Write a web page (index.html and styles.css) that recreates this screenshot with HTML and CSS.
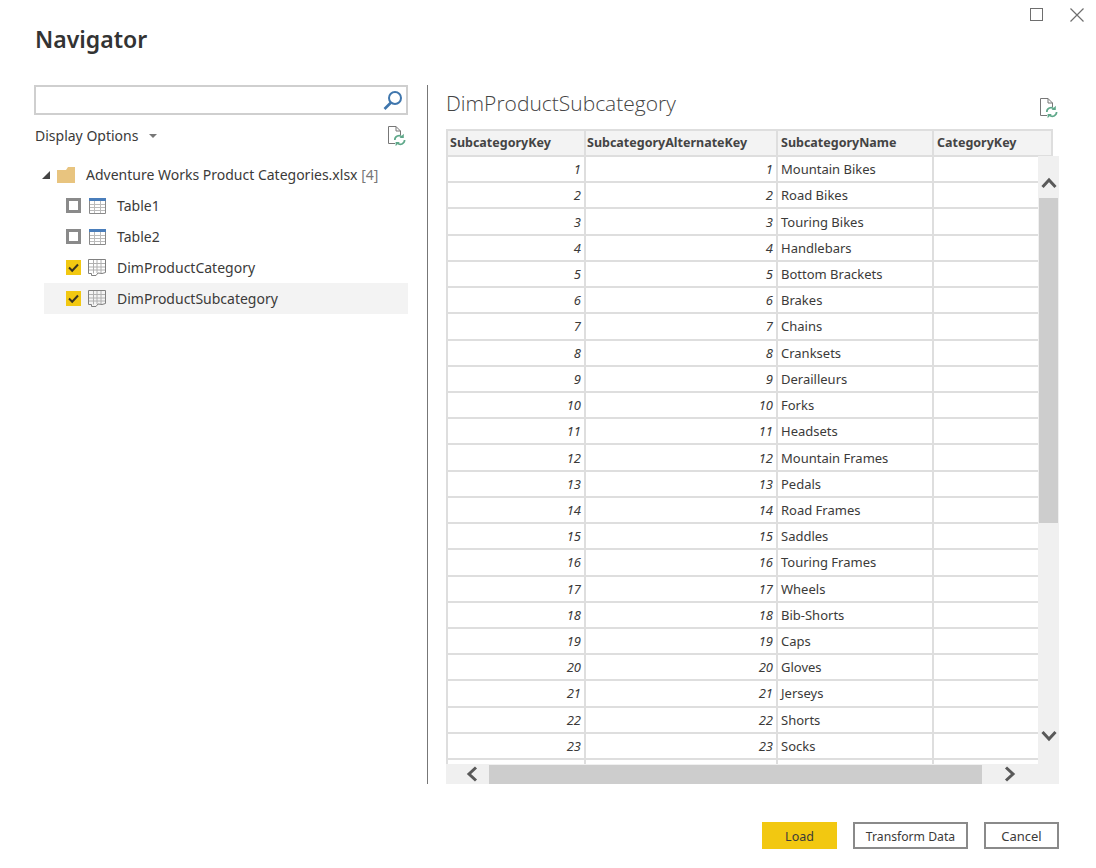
FILE: index.html
```html
<!DOCTYPE html>
<html lang="en">
<head>
    <meta charset="UTF-8">
    <title>Navigator</title>
    <link rel="stylesheet" href="styles.css">
</head>
<body>
<div class="ventana">
    <div class="controles">
        <span class="maximizar"></span>
        <svg class="cerrar" width="14" height="14" viewBox="0 0 14 14"><path d="M.5 .5 13.5 13.5M13.5 .5 .5 13.5" stroke="#6e6e6e" stroke-width="1.2" fill="none"/></svg>
    </div>
    <h1>Navigator</h1>

    <div class="principal">
        <div class="izquierda">
            <div class="buscador">
                <svg width="20" height="20" viewBox="0 0 20 20"><circle cx="12" cy="8" r="6" stroke="#3f76ad" stroke-width="2" fill="none"/><path d="M8 12.5 1.5 19" stroke="#3f76ad" stroke-width="2.6" fill="none"/></svg>
            </div>
            <div class="opciones">
                <span>Display Options</span>
                <span class="flecha"></span>
                <svg class="recargar" width="19" height="20" viewBox="0 0 19 20"><path d="M8 17.5H1.5V.5H9L13.5 5V9M9 .5V5H13.5" stroke="#777" fill="none"/><path d="M7.8 14a4.2 4.2 0 0 1 7.2-3M17.6 14a4.2 4.2 0 0 1-7.2 3" stroke="#5fa88a" stroke-width="1.7" fill="none"/><path d="M16.8 7.8V12H12.6ZM8.6 20.2V16H12.8Z" fill="#5fa88a"/></svg>
            </div>
            <ul class="arbol">
                <li class="fila raiz">
                    <span class="triangulo"></span>
                    <svg width="18" height="16" viewBox="0 0 18 16"><path d="M0 3H9L11 0H18V16H0Z" fill="#e8c47f"/></svg>
                    <span>Adventure Works Product Categories.xlsx <span class="cuenta">[4]</span></span>
                </li>
                <li class="fila">
                    <span class="casilla"></span>
                    <svg class="icono" width="17" height="16" viewBox="0 0 17 16"><path d="M.5 6.5H16.5M.5 9.5H16.5M.5 12.5H16.5M5.5 2.5V15.5M11.5 2.5V15.5" stroke="#bbb" fill="none"/><path d="M.5 2.5H16.5V15.5H.5Z" stroke="#8a8a8a" fill="none"/><path d="M0 0H17V3H0Z" fill="#4a7ebb"/></svg>
                    <span>Table1</span>
                </li>
                <li class="fila">
                    <span class="casilla"></span>
                    <svg class="icono" width="17" height="16" viewBox="0 0 17 16"><path d="M.5 6.5H16.5M.5 9.5H16.5M.5 12.5H16.5M5.5 2.5V15.5M11.5 2.5V15.5" stroke="#bbb" fill="none"/><path d="M.5 2.5H16.5V15.5H.5Z" stroke="#8a8a8a" fill="none"/><path d="M0 0H17V3H0Z" fill="#4a7ebb"/></svg>
                    <span>Table2</span>
                </li>
                <li class="fila">
                    <span class="casilla marcada"><svg width="15" height="15" viewBox="0 0 15 15"><path d="M3 7.5 6.2 10.7 12 4.5" stroke="#3a3320" stroke-width="2" fill="none"/></svg></span>
                    <svg class="icono dim" width="18" height="17" viewBox="0 0 18 17"><path d="M.5 4.5H17.5M.5 8H17.5M.5 11H17.5M5.5 .5V14.5M9 .5V14M13 .5V14" stroke="#b0b0b0" fill="none"/><path d="M3.5 14.5H.5V.5H17.5V13.5L14 14.5 10 14 8 16.5H3.5Z" stroke="#808080" fill="none"/></svg>
                    <span>DimProductCategory</span>
                </li>
                <li class="fila activa">
                    <span class="casilla marcada"><svg width="15" height="15" viewBox="0 0 15 15"><path d="M3 7.5 6.2 10.7 12 4.5" stroke="#3a3320" stroke-width="2" fill="none"/></svg></span>
                    <svg class="icono dim" width="18" height="17" viewBox="0 0 18 17"><path d="M.5 4.5H17.5M.5 8H17.5M.5 11H17.5M5.5 .5V14.5M9 .5V14M13 .5V14" stroke="#b0b0b0" fill="none"/><path d="M3.5 14.5H.5V.5H17.5V13.5L14 14.5 10 14 8 16.5H3.5Z" stroke="#808080" fill="none"/></svg>
                    <span>DimProductSubcategory</span>
                </li>
            </ul>
        </div>

        <div class="derecha">
            <div class="cabecera">
                <h2>DimProductSubcategory</h2>
                <svg class="recargar" width="19" height="20" viewBox="0 0 19 20"><path d="M8 17.5H1.5V.5H9L13.5 5V9M9 .5V5H13.5" stroke="#777" fill="none"/><path d="M7.8 14a4.2 4.2 0 0 1 7.2-3M17.6 14a4.2 4.2 0 0 1-7.2 3" stroke="#5fa88a" stroke-width="1.7" fill="none"/><path d="M16.8 7.8V12H12.6ZM8.6 20.2V16H12.8Z" fill="#5fa88a"/></svg>
            </div>
            <div class="vista">
                <table>
                    <thead>
                        <tr><th>SubcategoryKey</th><th>SubcategoryAlternateKey</th><th>SubcategoryName</th><th>CategoryKey</th></tr>
                    </thead>
                    <tbody>
                        <tr><td class="num">1</td><td class="num">1</td><td>Mountain Bikes</td><td></td></tr>
                        <tr><td class="num">2</td><td class="num">2</td><td>Road Bikes</td><td></td></tr>
                        <tr><td class="num">3</td><td class="num">3</td><td>Touring Bikes</td><td></td></tr>
                        <tr><td class="num">4</td><td class="num">4</td><td>Handlebars</td><td></td></tr>
                        <tr><td class="num">5</td><td class="num">5</td><td>Bottom Brackets</td><td></td></tr>
                        <tr><td class="num">6</td><td class="num">6</td><td>Brakes</td><td></td></tr>
                        <tr><td class="num">7</td><td class="num">7</td><td>Chains</td><td></td></tr>
                        <tr><td class="num">8</td><td class="num">8</td><td>Cranksets</td><td></td></tr>
                        <tr><td class="num">9</td><td class="num">9</td><td>Derailleurs</td><td></td></tr>
                        <tr><td class="num">10</td><td class="num">10</td><td>Forks</td><td></td></tr>
                        <tr><td class="num">11</td><td class="num">11</td><td>Headsets</td><td></td></tr>
                        <tr><td class="num">12</td><td class="num">12</td><td>Mountain Frames</td><td></td></tr>
                        <tr><td class="num">13</td><td class="num">13</td><td>Pedals</td><td></td></tr>
                        <tr><td class="num">14</td><td class="num">14</td><td>Road Frames</td><td></td></tr>
                        <tr><td class="num">15</td><td class="num">15</td><td>Saddles</td><td></td></tr>
                        <tr><td class="num">16</td><td class="num">16</td><td>Touring Frames</td><td></td></tr>
                        <tr><td class="num">17</td><td class="num">17</td><td>Wheels</td><td></td></tr>
                        <tr><td class="num">18</td><td class="num">18</td><td>Bib-Shorts</td><td></td></tr>
                        <tr><td class="num">19</td><td class="num">19</td><td>Caps</td><td></td></tr>
                        <tr><td class="num">20</td><td class="num">20</td><td>Gloves</td><td></td></tr>
                        <tr><td class="num">21</td><td class="num">21</td><td>Jerseys</td><td></td></tr>
                        <tr><td class="num">22</td><td class="num">22</td><td>Shorts</td><td></td></tr>
                        <tr><td class="num">23</td><td class="num">23</td><td>Socks</td><td></td></tr>
                        <tr><td class="num"></td><td class="num"></td><td></td><td></td></tr>
                    </tbody>
                </table>
                <div class="barra-v">
                    <svg width="16" height="12" viewBox="0 0 16 12"><path d="M1.5 10 8 3 14.5 10" stroke="#595959" stroke-width="3" fill="none"/></svg>
                    <span class="pulgar-v"></span>
                    <svg class="abajo" width="16" height="12" viewBox="0 0 16 12"><path d="M1.5 2 8 9 14.5 2" stroke="#595959" stroke-width="3" fill="none"/></svg>
                </div>
                <div class="barra-h">
                    <svg width="12" height="16" viewBox="0 0 12 16"><path d="M10 1.5 3 8 10 14.5" stroke="#595959" stroke-width="3" fill="none"/></svg>
                    <span class="pulgar-h"></span>
                    <svg width="12" height="16" viewBox="0 0 12 16"><path d="M2 1.5 9 8 2 14.5" stroke="#595959" stroke-width="3" fill="none"/></svg>
                </div>
            </div>
        </div>
    </div>

    <div class="botones">
        <button class="primario">Load</button>
        <button class="transformar">Transform Data</button>
        <button class="cancelar">Cancel</button>
    </div>
</div>
</body>
</html>
```

FILE: styles.css
```css
* {
    box-sizing: border-box;
}
html, body {
    margin: 0;
    height: 100%;
    background: #fff;
    overflow: hidden;
}
body {
    font-family: "Noto Sans", "Open Sans", Arial, sans-serif;
    font-size: 14px;
    color: #3b3a39;
}
.ventana {
    width: 1096px;
    height: 868px;
    display: flex;
    flex-direction: column;
}
.controles {
    display: flex;
    justify-content: flex-end;
    align-items: center;
    gap: 27px;
    height: 29px;
    padding: 0 12px 0 0;
}
.maximizar {
    width: 13px;
    height: 13px;
    border: 1px solid #6e6e6e;
}
h1 {
    margin: 0 0 0 35px;
    height: 56px;
    font-size: 23px;
    line-height: 20px;
    font-weight: 600;
    color: #333;
}
.principal {
    display: flex;
    height: 699px;
}
.izquierda {
    width: 394px;
    margin-left: 34px;
    padding-right: 19px;
    border-right: 1px solid #777;
}
.buscador {
    height: 30px;
    display: flex;
    align-items: center;
    justify-content: flex-end;
    padding-right: 3px;
    border: 2px solid #cfcfcf;
}
.opciones {
    display: flex;
    align-items: center;
    height: 40px;
    padding: 1px 2px 0 1px;
}
.flecha {
    margin-left: 11px;
    border: 4px solid transparent;
    border-top-color: #777;
    border-bottom: 0;
}
.opciones .recargar {
    margin-left: auto;
}
.arbol {
    list-style: none;
    margin: 4px 0 0;
    padding: 0 0 0 10px;
}
.fila {
    display: flex;
    align-items: center;
    height: 31px;
    padding-left: 22px;
}
.fila .icono {
    margin: 0 11px 0 8px;
}
.fila .dim {
    margin: 0 11px 0 7px;
}
.raiz {
    margin-left: -2px;
    padding-left: 0;
    gap: 10px;
}
.raiz svg {
    margin: 0 1px 0 -3px;
}
.cuenta {
    color: #777;
}
.triangulo {
    width: 0;
    height: 0;
    margin-top: 1px;
    border-left: 8px solid transparent;
    border-bottom: 8px solid #444;
}
.casilla {
    width: 15px;
    height: 15px;
    border: 3px solid #8a8a8a;
    background: #fff;
}
.marcada {
    border: 0;
    background: #f2c811;
}
.marcada svg {
    display: block;
}
.activa {
    background: #f3f3f3;
}
.derecha {
    width: 613px;
    margin-left: 18px;
    display: flex;
    flex-direction: column;
}
.cabecera {
    display: flex;
    justify-content: space-between;
    height: 44px;
}
h2 {
    margin: 0;
    font-family: "Open Sans", sans-serif;
    font-size: 21px;
    font-weight: 300;
    line-height: 36px;
    color: #444;
}
.cabecera .recargar {
    margin: 13px 1px 0 0;
}
.vista {
    position: relative;
    flex: 1;
    overflow: hidden;
}
table {
    width: 607px;
    table-layout: fixed;
    border-collapse: collapse;
}
th, td {
    padding: 0 3px;
    border: 2px solid #dedede;
    font-size: 13px;
    overflow: hidden;
    white-space: nowrap;
}
th:nth-child(1) { width: 138px; }
th:nth-child(2) { width: 192px; }
th:nth-child(3) { width: 156px; }
th {
    height: 26px;
    padding: 0 3px 1px;
    background: #f3f3f3;
    text-align: left;
    font-size: 12.5px;
    font-weight: 700;
    color: #444;
}
th:nth-child(1) { padding-left: 2px; }
th:nth-child(2) { padding-left: 1px; }
td {
    height: 26.225px;
}
.num {
    text-align: right;
    font-style: italic;
}
.barra-v {
    position: absolute;
    top: 27px;
    right: 0;
    bottom: 20px;
    width: 21px;
    display: flex;
    flex-direction: column;
    align-items: center;
    background: #f0f0f0;
}
.barra-v svg {
    margin-top: 21px;
    flex: none;
}
.barra-v .abajo {
    position: absolute;
    bottom: 22px;
}
.pulgar-v {
    width: 19px;
    height: 325px;
    margin-top: 9px;
    background: #cdcdcd;
}
.barra-h {
    position: absolute;
    left: 0;
    right: 0;
    bottom: 0;
    height: 20px;
    display: flex;
    align-items: center;
    background: #f0f0f0;
}
.barra-h svg:first-child {
    margin-left: 20px;
}
.pulgar-h {
    width: 493px;
    height: 19px;
    margin-left: 11px;
    background: #cdcdcd;
}
.barra-h svg:last-child {
    margin-left: 22px;
}
.botones {
    display: flex;
    justify-content: flex-end;
    gap: 16px;
    padding: 38px 37px 0 0;
}
button {
    height: 27px;
    padding: 0;
    font-family: inherit;
    font-size: 13px;
    color: #3b3a39;
    background: #fff;
    border: 2px solid #8a8a8a;
}
.primario {
    width: 75px;
    padding-top: 1px;
    font-size: 12.5px;
    background: #f2c811;
    border: 0;
}
.transformar {
    width: 115px;
    padding-top: 1px;
    font-size: 12.2px;
}
.cancelar {
    width: 75px;
}
```
